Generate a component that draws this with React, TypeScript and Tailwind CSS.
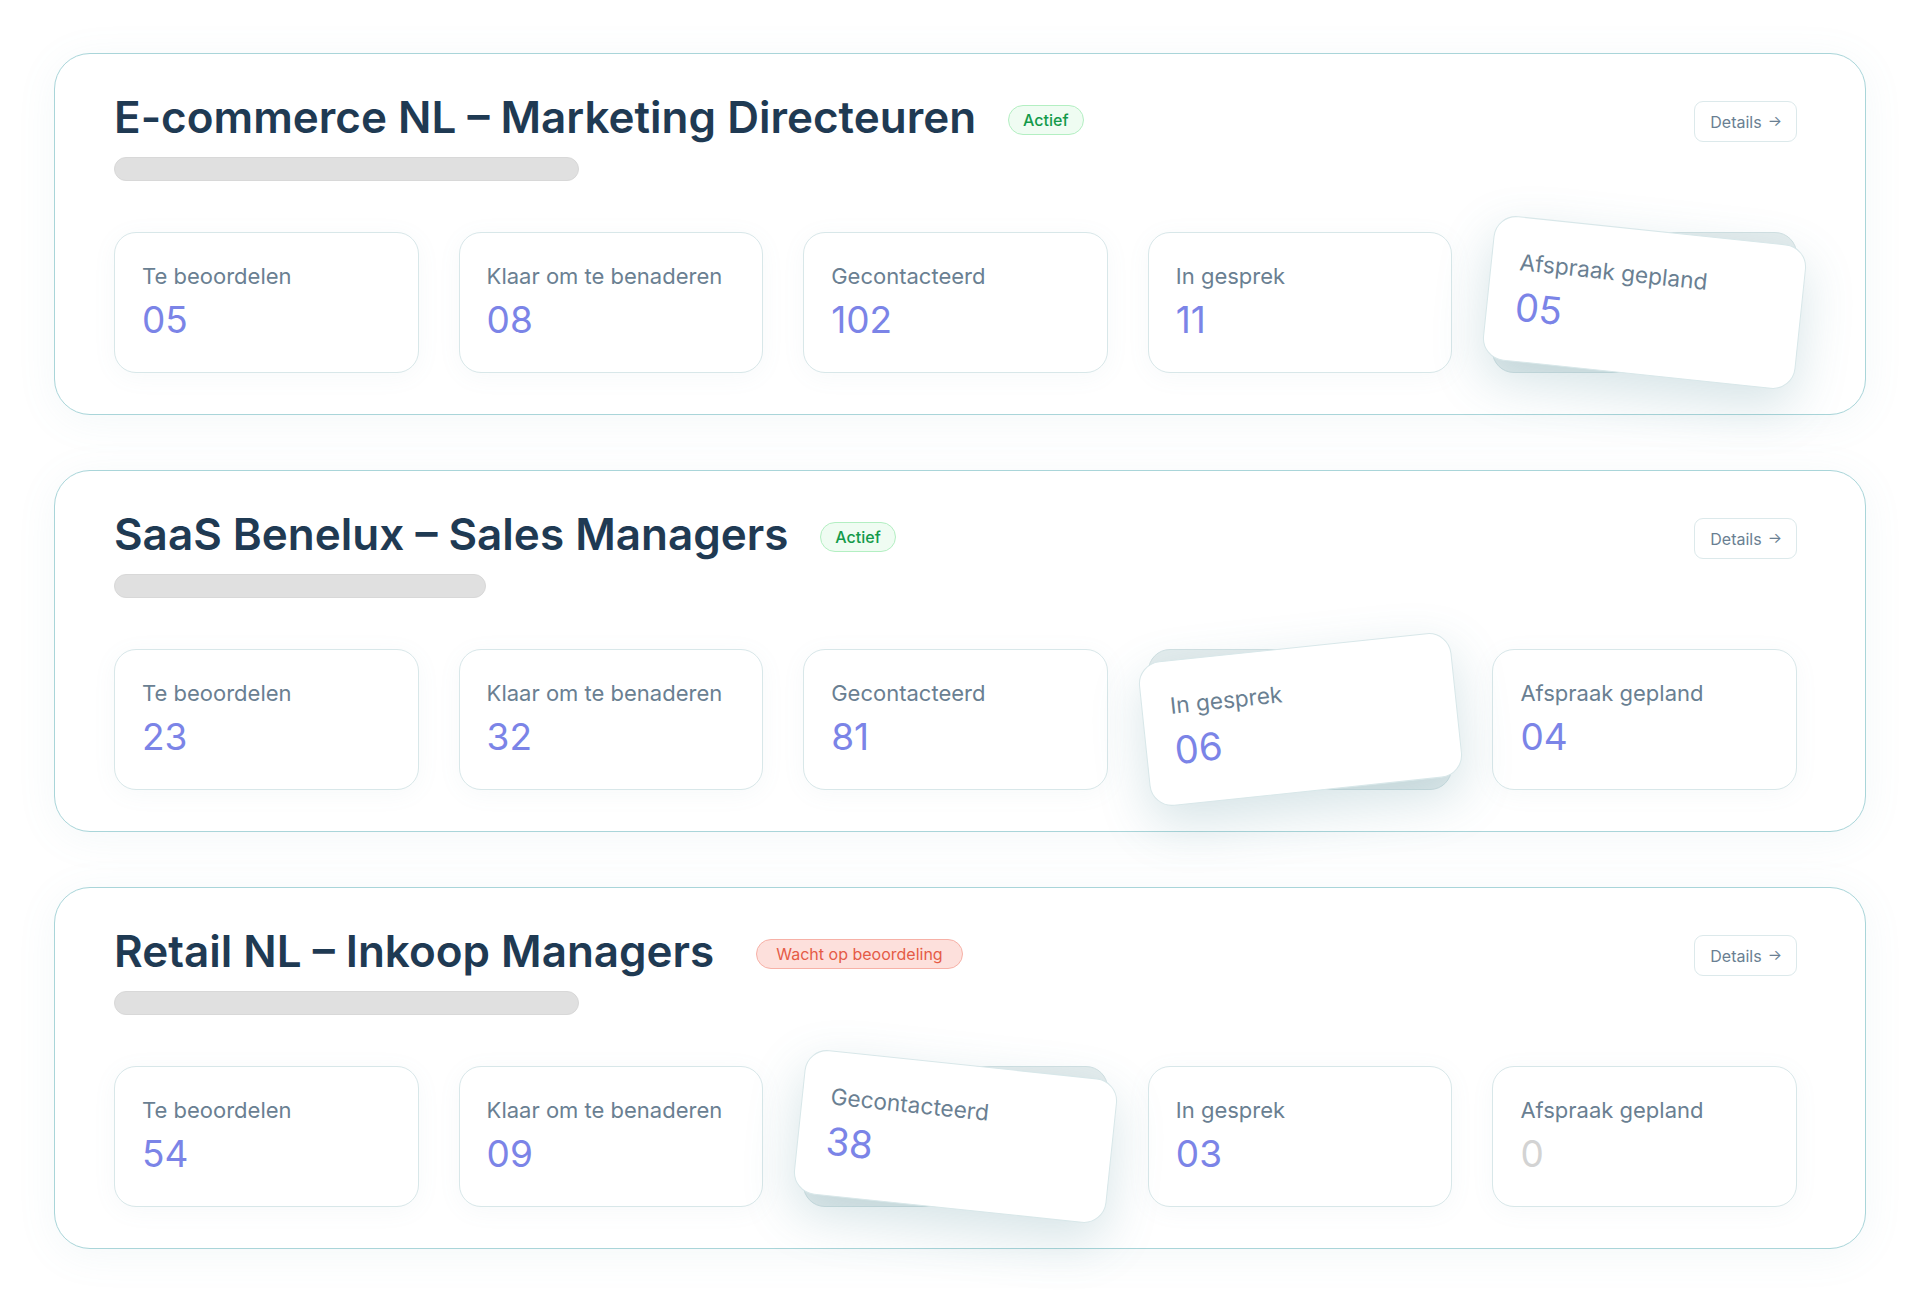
import React from 'react';

type Stat = { label: string; value: string; muted?: boolean };

type Campaign = {
  title: string;
  status: 'active' | 'pending';
  skeleton: number;
  tilted: number;
  tilt: 'right' | 'left';
  stats: Stat[];
};

const campaigns: Campaign[] = [
  {
    title: 'E-commerce NL – Marketing Directeuren',
    status: 'active',
    skeleton: 465,
    tilted: 4,
    tilt: 'right',
    stats: [
      { label: 'Te beoordelen', value: '05' },
      { label: 'Klaar om te benaderen', value: '08' },
      { label: 'Gecontacteerd', value: '102' },
      { label: 'In gesprek', value: '11' },
      { label: 'Afspraak gepland', value: '05' },
    ],
  },
  {
    title: 'SaaS Benelux – Sales Managers',
    status: 'active',
    skeleton: 372,
    tilted: 3,
    tilt: 'left',
    stats: [
      { label: 'Te beoordelen', value: '23' },
      { label: 'Klaar om te benaderen', value: '32' },
      { label: 'Gecontacteerd', value: '81' },
      { label: 'In gesprek', value: '06' },
      { label: 'Afspraak gepland', value: '04' },
    ],
  },
  {
    title: 'Retail NL – Inkoop Managers',
    status: 'pending',
    skeleton: 465,
    tilted: 2,
    tilt: 'right',
    stats: [
      { label: 'Te beoordelen', value: '54' },
      { label: 'Klaar om te benaderen', value: '09' },
      { label: 'Gecontacteerd', value: '38' },
      { label: 'In gesprek', value: '03' },
      { label: 'Afspraak gepland', value: '0', muted: true },
    ],
  },
];

function StatCard({ stat, tilt }: { stat: Stat; tilt?: 'right' | 'left' }) {
  const base =
    'h-[141px] rounded-[22px] border-[1.5px] border-[#d8e7e9] bg-white pl-[27px] pt-[28px]';

  const body = (
    <>
      <div className="text-[22px] leading-[30px] text-[#6a7f92]">{stat.label}</div>
      <div
        className={`mt-[9px] text-[37px] leading-[40px] ${
          stat.muted ? 'text-[#d3d3d3]' : 'text-[#7b84e7]'
        }`}
      >
        {stat.value}
      </div>
    </>
  );

  if (!tilt) {
    return <div className={`${base} shadow-[0_4px_24px_rgba(120,160,170,0.06)]`}>{body}</div>;
  }

  return (
    <div className="relative h-[141px]">
      {/* card left behind at the original spot */}
      <div className="h-[141px] rounded-[22px] border-[1.5px] border-[#d2e1e3] bg-[#e5edee]" />
      <div
        className={`absolute inset-0 ${base} shadow-[0_18px_50px_rgba(70,130,145,0.22)] ${
          tilt === 'right' ? 'rotate-[6deg] scale-[1.03]' : '-rotate-[6deg] scale-[1.03]'
        }`}
      >
        {body}
      </div>
    </div>
  );
}

function CampaignPanel({ c }: { c: Campaign }) {
  return (
    <div className="rounded-[36px] border-[1.5px] border-[#a9d5d9] bg-white pl-[59px] pr-[68px] pt-[36px] pb-[41px] shadow-[0_6px_40px_rgba(110,170,180,0.08)]">
      <div className="flex items-start justify-between">
        <div>
          <div className="flex items-center gap-[32px]">
            <h2 className="text-[44px] font-semibold leading-[54px] text-[#1f3a53]">{c.title}</h2>
            {c.status === 'active' ? (
              <span className="mt-[6px] rounded-full border-[1.5px] border-[#b3efc2] bg-[#effcf2] px-[14px] py-[3px] text-[16px] font-medium leading-[22px] text-[#139a4a]">
                Actief
              </span>
            ) : (
              <span className="ml-[10px] mt-[6px] rounded-full border-[1.5px] border-[#f7b1a7] bg-[#fde0dc] px-[19px] py-[3px] text-[16px] leading-[22px] text-[#e55b46]">
                Wacht op beoordeling
              </span>
            )}
          </div>
          <div
            className="mt-[13px] h-[24px] rounded-full border border-[#d8d8d8] bg-[#e0e0e0]"
            style={{ width: c.skeleton }}
          />
        </div>
        <button className="mt-[11px] flex h-[41px] items-center gap-[6px] rounded-[9px] border-[1.5px] border-[#dce9eb] bg-white pl-[15px] pr-[14px] text-[16px] text-[#6a7f92]">
          <span>Details</span>
          <span className="text-[15px]">→</span>
        </button>
      </div>

      <div className="mt-[51px] grid grid-cols-5 gap-[40px]">
        {c.stats.map((s, i) => (
          <StatCard key={s.label} stat={s} tilt={i === c.tilted ? c.tilt : undefined} />
        ))}
      </div>
    </div>
  );
}

export default function App() {
  return (
    <div
      className="min-h-[1303px] w-full bg-white px-[54px] pt-[53px] pb-[54px]"
      style={{ fontFamily: 'Inter, "Noto Sans", sans-serif' }}
    >
      <div className="flex flex-col gap-[55px]">
        {campaigns.map((c) => (
          <CampaignPanel key={c.title} c={c} />
        ))}
      </div>
    </div>
  );
}
